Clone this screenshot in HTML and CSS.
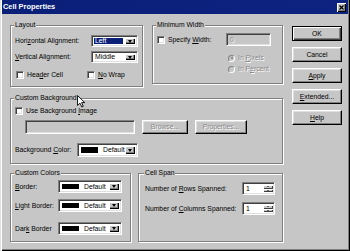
FILE: index.html
```html
<!DOCTYPE html>
<html>
<head>
<meta charset="utf-8">
<link rel="stylesheet" href="styles.css">
</head>
<body>
<div class="window">
  <div class="titlebar">
    <span class="title">Cell Properties</span>
    <span class="close"><svg width="5" height="5" viewBox="0 0 5 5"><path d="M0.5 0.5L4.5 4.5M4.5 0.5L0.5 4.5" stroke="#000" stroke-width="1.3"/></svg></span>
  </div>
  <div class="content">
    <div class="groups">
      <div class="row row1">
        <fieldset class="group layout">
          <legend>Layout</legend>
          <div class="form layout-form">
            <span>Hori<u>z</u>ontal Alignment:</span>
            <span class="combo h12"><span class="value sel">Left</span><span class="drop"></span></span>
            <span><u>V</u>ertical Alignment:</span>
            <span class="combo h12"><span class="value">Middle</span><span class="drop"></span></span>
          </div>
          <div class="checks">
            <span class="check first"><span class="box"></span><span>Hea<u>d</u>er Cell</span></span>
            <span class="check"><span class="box"></span><span><u>N</u>o Wrap</span></span>
          </div>
        </fieldset>
        <fieldset class="group minwidth">
          <legend>Minimum Width</legend>
          <div class="form min-form">
            <span class="check"><span class="box"></span><span>Specify <u>W</u>idth:</span></span>
            <span class="field disabled">0</span>
          </div>
          <div class="radios">
            <span class="radio dis"><span class="dot on"></span><span>In <u>P</u>ixels</span></span>
            <span class="radio dis"><span class="dot"></span><span>In P<u>e</u>rcent</span></span>
          </div>
        </fieldset>
      </div>
      <fieldset class="group bg">
        <legend>Custom Background</legend>
        <span class="check"><span class="box"></span><span>Use Background <u>I</u>mage</span></span>
        <div class="bg-row">
          <span class="field bgfield"></span>
          <span class="btn dis browse">Browse...</span>
          <span class="btn dis props">Properties...</span>
        </div>
        <div class="bg-color">
          <span>Background <u>C</u>olor:</span>
          <span class="combo color h14"><span class="swatch"></span><span class="value">Default</span><span class="drop"></span></span>
        </div>
      </fieldset>
      <div class="row row3">
        <fieldset class="group colors">
          <legend>Custom Colors</legend>
          <div class="form colors-form">
            <span><u>B</u>order:</span>
            <span class="combo color h13"><span class="swatch"></span><span class="value">Default</span><span class="drop"></span></span>
            <span><u>L</u>ight Border:</span>
            <span class="combo color h13"><span class="swatch"></span><span class="value">Default</span><span class="drop"></span></span>
            <span class="r3">Dar<u>k</u> Border</span>
            <span class="combo color h13 r3"><span class="swatch"></span><span class="value">Default</span><span class="drop"></span></span>
          </div>
        </fieldset>
        <fieldset class="group span">
          <legend>Cell Span</legend>
          <div class="form span-form">
            <span>Number of <u>R</u>ows Spanned:</span>
            <span class="spin"><span class="value">1</span><span class="arrows"><span class="up"></span><span class="down"></span></span></span>
            <span>Number of <u>C</u>olumns Spanned:</span>
            <span class="spin"><span class="value">1</span><span class="arrows"><span class="up"></span><span class="down"></span></span></span>
          </div>
        </fieldset>
      </div>
    </div>
    <div class="buttons">
      <span class="btn default">OK</span>
      <span class="btn">Cancel</span>
      <span class="btn"><span><u>A</u>pply</span></span>
      <span class="btn"><span><u>E</u>xtended...</span></span>
      <span class="btn"><span><u>H</u>elp</span></span>
    </div>
  </div>
  <svg class="cursor" width="9" height="13" viewBox="0 0 9 13"><path d="M0.5 0.5V10.5L3 8.2L4.8 12L6.3 11.3L4.6 7.6H7.8Z" fill="#fff" stroke="#000" stroke-width="0.9" stroke-linejoin="round"/></svg>
</div>
</body>
</html>
```

FILE: styles.css
```css
* { box-sizing: border-box; }
html, body { margin: 0; padding: 0; }
body {
  width: 350px;
  height: 251px;
  overflow: hidden;
  background: #c6c6c6;
  font-family: "Liberation Sans", Arial, sans-serif;
  font-size: 6.8px;
  line-height: 8px;
  color: #000;
}
u { text-decoration: underline; text-underline-offset: 1px; }

.window {
  position: relative;
  width: 350px;
  height: 251px;
  background: #c6c6c6;
  padding: 0 2px 2px 2px;
  box-shadow: inset 1px 0 #dfdfdf, inset 2px 0 #fff, inset -1px -1px #000, inset -2px -2px #808080;
}

.titlebar {
  height: 14px;
  background: linear-gradient(90deg, #0a1f78, #0d2380);
  display: flex;
  align-items: center;
  justify-content: space-between;
  padding: 0 2px 0 1px;
}
.title { color: #fff; font-weight: bold; font-size: 7.4px; }
.close {
  width: 9px; height: 9px;
  background: #c6c6c6;
  box-shadow: inset 1px 1px #fff, inset -1px -1px #000, inset -2px -2px #808080;
  display: flex; align-items: center; justify-content: center;
}
.close svg { display: block; }

.content {
  display: flex;
  padding-left: 8px;
  gap: 9px;
}
.groups { width: 273px; display: flex; flex-direction: column; padding-top: 7px; }
.row { display: flex; align-items: flex-start; }
.row1 { gap: 9px; height: 66px; }
.row3 { gap: 7px; margin-top: 5px; }

.group {
  margin: 0;
  padding: 4px 4px 0 4px;
  border: 1px solid #808080;
  box-shadow: inset 1px 1px #fff, 1px 1px #fff;
  min-width: 0;
}
legend {
  padding: 0 1px;
  margin-left: -1px;
  height: 8px;
  line-height: 8px;
  background: #c6c6c6;
}

.layout { width: 133px; height: 66px; padding-top: 6px; }
.minwidth { width: 131px; height: 63px; }
.bg { width: 273px; height: 70px; margin-top: 7px; }
.colors { width: 121px; height: 73px; padding-top: 3px; }
.span { width: 145px; height: 73px; padding: 5px 4px 0 6px; }

.form { display: grid; align-items: center; }
.layout-form { grid-template-columns: 76px 47px; row-gap: 4px; }
.min-form { grid-template-columns: 69px 45px; }
.colors-form { grid-template-columns: 43px 64px; row-gap: 6px; }
.colors-form .r3 { margin-top: 4px; }
.span-form { grid-template-columns: 97px 33px; row-gap: 7px; }

/* checkboxes */
.check { display: flex; align-items: center; height: 9px; white-space: nowrap; }
.box {
  width: 8px; height: 8px;
  margin-right: 3px;
  background: #fff;
  border: 1px solid; border-color: #808080 #fff #fff #808080;
  box-shadow: inset 1px 1px #404040, inset -1px -1px #dfdfdf;
  flex: none;
}
.checks { display: flex; margin-top: 7px; padding-left: 1px; }
.checks .first { width: 71px; }

/* radios */
.radios { display: flex; flex-direction: column; gap: 3px; margin-top: 8px; padding-left: 71px; }
.radio { display: flex; align-items: center; height: 8px; white-space: nowrap; }
.radio .dot {
  width: 7px; height: 7px; border-radius: 50%;
  margin-right: 3px;
  background: #c6c6c6;
  border: 1px solid; border-color: #808080 #fff #fff #808080;
  position: relative;
  flex: none;
}
.radio .dot.on::after {
  content: ""; position: absolute; left: 1.5px; top: 1.5px;
  width: 2px; height: 2px; border-radius: 50%; background: #808080;
}
.dis { color: #8a8a8a; text-shadow: 1px 1px 0 #fff; }

/* fields */
.field {
  display: flex; align-items: center;
  height: 13px;
  padding-left: 3px;
  background: #fff;
  border: 1px solid; border-color: #808080 #fff #fff #808080;
  box-shadow: inset 1px 1px #404040, inset -1px -1px #dfdfdf;
}
.field.disabled { background: #c6c6c6; color: #8a8a8a; text-shadow: 1px 1px 0 #fff; }
.bgfield { width: 110px; height: 14px; background: #c6c6c6; }

/* combos */
.combo {
  display: flex; align-items: stretch;
  padding: 2px;
  background: #fff;
  border: 1px solid; border-color: #808080 #fff #fff #808080;
  box-shadow: inset 1px 1px #404040, inset -1px -1px #dfdfdf;
}
.h12 { height: 12px; }
.h13 { height: 13px; }
.h14 { height: 14px; }
.combo .value { flex: 1; display: flex; align-items: center; padding-left: 1px; white-space: nowrap; }
.combo .value.sel { background: #0a1f78; color: #fff; margin-right: 2px; }
.drop {
  width: 10px; flex: none;
  background: #c6c6c6;
  box-shadow: inset 1px 1px #fff, inset -1px -1px #000, inset -2px -2px #808080;
  display: flex; align-items: center; justify-content: center;
}
.drop::after {
  content: "";
  width: 0; height: 0;
  border-left: 2.5px solid transparent;
  border-right: 2.5px solid transparent;
  border-top: 3px solid #000;
}
.color .swatch { width: 17px; flex: none; background: #000; margin: 1px 4px 1px 1px; }

/* background rows */
.bg-row { display: flex; align-items: center; margin-top: 5px; padding-left: 10px; }
.bg-row .browse { width: 46px; margin-left: 7px; }
.bg-row .props { width: 52px; margin-left: 7px; }
.bg-color { display: grid; grid-template-columns: 62px 61px; align-items: center; margin-top: 9px; }

/* spin */
.spin {
  display: flex; height: 13px;
  padding: 2px 1px 2px 2px;
  background: #fff;
  border: 1px solid; border-color: #808080 #fff #fff #808080;
  box-shadow: inset 1px 1px #404040, inset -1px -1px #dfdfdf;
}
.spin .value { flex: 1; display: flex; align-items: center; padding-left: 1px; }
.arrows { width: 10px; display: flex; flex-direction: column; }
.arrows span {
  flex: 1;
  background: #c6c6c6;
  box-shadow: inset 1px 1px #fff, inset -1px -1px #404040;
  display: flex; align-items: center; justify-content: center;
}
.arrows .up::after {
  content: ""; width: 0; height: 0;
  border-left: 1.5px solid transparent; border-right: 1.5px solid transparent;
  border-bottom: 1.5px solid #000;
}
.arrows .down::after {
  content: ""; width: 0; height: 0;
  border-left: 1.5px solid transparent; border-right: 1.5px solid transparent;
  border-top: 1.5px solid #000;
}

/* buttons */
.buttons { display: flex; flex-direction: column; gap: 6px; padding-top: 12px; width: 50px; }
.btn {
  display: flex; align-items: center; justify-content: center;
  height: 15px;
  background: #c6c6c6;
  border: 1px solid; border-color: #fff #000 #000 #fff;
  box-shadow: inset -1px -1px #808080, inset 1px 1px #dfdfdf;
  white-space: nowrap;
}
.bg-row .btn { height: 14px; }
.btn.default {
  border-color: #000;
  box-shadow: inset 1px 1px #fff, inset -1px -1px #404040, inset -2px -2px #808080;
}

.cursor { position: absolute; left: 77px; top: 95px; }
```
